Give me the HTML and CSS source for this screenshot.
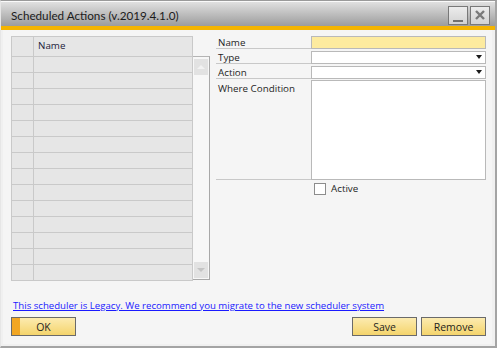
FILE: index.html
```html
<!DOCTYPE html>
<html lang="en">
<head>
    <meta charset="UTF-8">
    <title>Scheduled Actions</title>
    <link rel="stylesheet" href="styles.css">
</head>
<body>
    <div class="window">
        <div class="titlebar">
            <span class="title">Scheduled Actions (v.2019.4.1.0)</span>
            <div class="controls">
                <button class="ctrl" aria-label="Minimize">
                    <svg width="18" height="17" viewBox="0 0 18 17"><rect x="4" y="13" width="10" height="2" fill="#707070"/></svg>
                </button>
                <button class="ctrl" aria-label="Close">
                    <svg width="18" height="17" viewBox="0 0 18 17"><path d="M5 4 L13 12 M13 4 L5 12" stroke="#7a7a7a" stroke-width="2.4"/></svg>
                </button>
            </div>
        </div>
        <div class="accent"></div>

        <div class="content">
            <div class="main">
                <div class="grid">
                    <div class="row head"><div class="cell idx"></div><div class="cell name">Name</div></div>
                    <div class="row"><div class="cell idx"></div><div class="cell name"></div></div>
                    <div class="row"><div class="cell idx"></div><div class="cell name"></div></div>
                    <div class="row"><div class="cell idx"></div><div class="cell name"></div></div>
                    <div class="row"><div class="cell idx"></div><div class="cell name"></div></div>
                    <div class="row"><div class="cell idx"></div><div class="cell name"></div></div>
                    <div class="row"><div class="cell idx"></div><div class="cell name"></div></div>
                    <div class="row"><div class="cell idx"></div><div class="cell name"></div></div>
                    <div class="row"><div class="cell idx"></div><div class="cell name"></div></div>
                    <div class="row"><div class="cell idx"></div><div class="cell name"></div></div>
                    <div class="row"><div class="cell idx"></div><div class="cell name"></div></div>
                    <div class="row"><div class="cell idx"></div><div class="cell name"></div></div>
                    <div class="row"><div class="cell idx"></div><div class="cell name"></div></div>
                    <div class="row"><div class="cell idx"></div><div class="cell name"></div></div>
                    <div class="row"><div class="cell idx"></div><div class="cell name"></div></div>
                </div>
                <div class="scrollbar">
                    <div class="sbtn"><span class="tri up"></span></div>
                    <div class="sbtn"><span class="tri down"></span></div>
                </div>

                <div class="form">
                    <div class="frow">
                        <label class="flabel">Name</label>
                        <div class="field name-field"></div>
                    </div>
                    <div class="frow">
                        <label class="flabel">Type</label>
                        <div class="field combo"><span class="arrow"></span></div>
                    </div>
                    <div class="frow">
                        <label class="flabel">Action</label>
                        <div class="field combo"><span class="arrow"></span></div>
                    </div>
                    <div class="frow tall">
                        <label class="flabel">Where Condition</label>
                        <div class="field area"></div>
                    </div>
                    <div class="check">
                        <span class="box"></span>
                        <span>Active</span>
                    </div>
                </div>
            </div>

            <a class="legacy" href="#">This scheduler is Legacy. We recommend you migrate to the new scheduler system</a>

            <div class="actions">
                <button class="btn ok">OK</button>
                <div class="spacer"></div>
                <button class="btn">Save</button>
                <button class="btn">Remove</button>
            </div>
        </div>
    </div>
</body>
</html>
```

FILE: styles.css
```css
body {
    margin: 0;
    background-color: #f0f0f0;
    font-family: "Open Sans", "Noto Sans", sans-serif;
    font-size: 9.8px;
    color: #1e1e1e;
}

.window {
    width: 494px;
    height: 345px;
    border-top: 1px solid #9a9a9a;
    border-right: 2px solid #a4a4a4;
    border-bottom: 2px solid #a4a4a4;
    border-left: 1px solid #e6e6e6;
    box-sizing: content-box;
    display: flex;
    flex-direction: column;
}

.titlebar {
    height: 25px;
    display: flex;
    align-items: center;
    justify-content: space-between;
    padding: 0 5px 0 10px;
    background: linear-gradient(#e0e0e0, #bebebe 50%, #9c9c9c);
    border-top: 1px solid #fafafa;
    box-sizing: border-box;
}

.title {
    font-family: Lato, "Open Sans", sans-serif;
    font-size: 11.7px;
    color: #1b1b1b;
    padding-top: 1px;
}

.controls {
    display: flex;
    gap: 2px;
    padding-top: 3px;
}

.ctrl {
    width: 20px;
    height: 19px;
    padding: 0;
    border: 1px solid #787878;
    background: linear-gradient(#ececec, #d2d2d2);
    display: flex;
    align-items: center;
    justify-content: center;
}

.accent {
    height: 4px;
    background-color: #f4b400;
}

.content {
    flex: 1;
    margin: 0 3px 2px 2px;
    padding: 4px 6px 0 8px;
    background-color: #f5f5f5;
    display: flex;
    flex-direction: column;
}

.main {
    display: flex;
    align-items: flex-start;
    height: 247px;
}

/* grid */
.grid {
    margin-top: 2px;
    width: 184px;
    border: 1px solid #c9c9c9;
    border-bottom: none;
    box-sizing: border-box;
    background-color: #e6e6e6;
}

.row {
    display: flex;
    height: 16px;
    border-bottom: 1px solid #c9c9c9;
    box-sizing: border-box;
}

.row.head {
    height: 20px;
}

.cell.idx {
    width: 21px;
    border-right: 1px solid #c9c9c9;
}

.cell.name {
    padding: 2px 0 0 4px;
    color: #1b1b3a;
}

.scrollbar {
    margin-top: 22px;
    width: 17px;
    height: 224px;
    padding: 2px 1px 1px 1px;
    border-top: 1px solid #b4b4b4;
    border-right: 1px solid #a8a8a8;
    border-bottom: 1px solid #a8a8a8;
    box-sizing: border-box;
    background-color: #f7f7f7;
    display: flex;
    flex-direction: column;
    justify-content: space-between;
}

.sbtn {
    height: 16px;
    background-color: #e2e2e2;
    display: flex;
    align-items: center;
    justify-content: center;
}

.tri {
    width: 0;
    height: 0;
    border-left: 4px solid transparent;
    border-right: 4px solid transparent;
}

.tri.up {
    border-bottom: 4px solid #f2f2f2;
}

.tri.down {
    border-top: 4px solid #c4c4c4;
}

/* form */
.form {
    margin-left: 6px;
    width: 270px;
}

.frow {
    display: flex;
    align-items: flex-end;
    height: 15px;
}

.frow.tall {
    height: 101px;
}

.flabel {
    width: 95px;
    height: 100%;
    padding: 2px 0 0 2px;
    border-bottom: 1px solid #c8c8c8;
    box-sizing: border-box;
    line-height: 13px;
    display: block;
}

.frow.tall .flabel {
    padding-top: 3px;
}

.field {
    width: 175px;
    height: 13px;
    border: 1px solid #b9b9b9;
    box-sizing: border-box;
    background-color: #fff;
    position: relative;
}

.name-field {
    background-color: #fdeb9f;
}

.field.area {
    height: 100px;
}

.arrow {
    position: absolute;
    right: 3px;
    top: 3px;
    border-left: 3px solid transparent;
    border-right: 3px solid transparent;
    border-top: 4px solid #1a1a1a;
}

.check {
    display: flex;
    align-items: center;
    gap: 5px;
    margin: 2px 0 0 98px;
    height: 13px;
}

.check .box {
    width: 12px;
    height: 12px;
    border: 1px solid #8c8c8c;
    box-sizing: border-box;
    background-color: #fff;
}

/* footer */
.legacy {
    margin: 18px 0 0 2px;
    color: #1a1aff;
    font-size: 9.65px;
    line-height: 13px;
}

.actions {
    display: flex;
    gap: 4px;
    margin-top: 5px;
}

.spacer {
    flex: 1;
}

.btn {
    width: 65px;
    height: 19px;
    padding: 0;
    border: 1px solid #6a6a6a;
    background: linear-gradient(#fcebb0, #f4d46c);
    font-family: inherit;
    font-size: 10.5px;
    color: #1e1e1e;
}

.btn.ok {
    box-shadow: inset 8px 0 0 #f2a622;
}
```
